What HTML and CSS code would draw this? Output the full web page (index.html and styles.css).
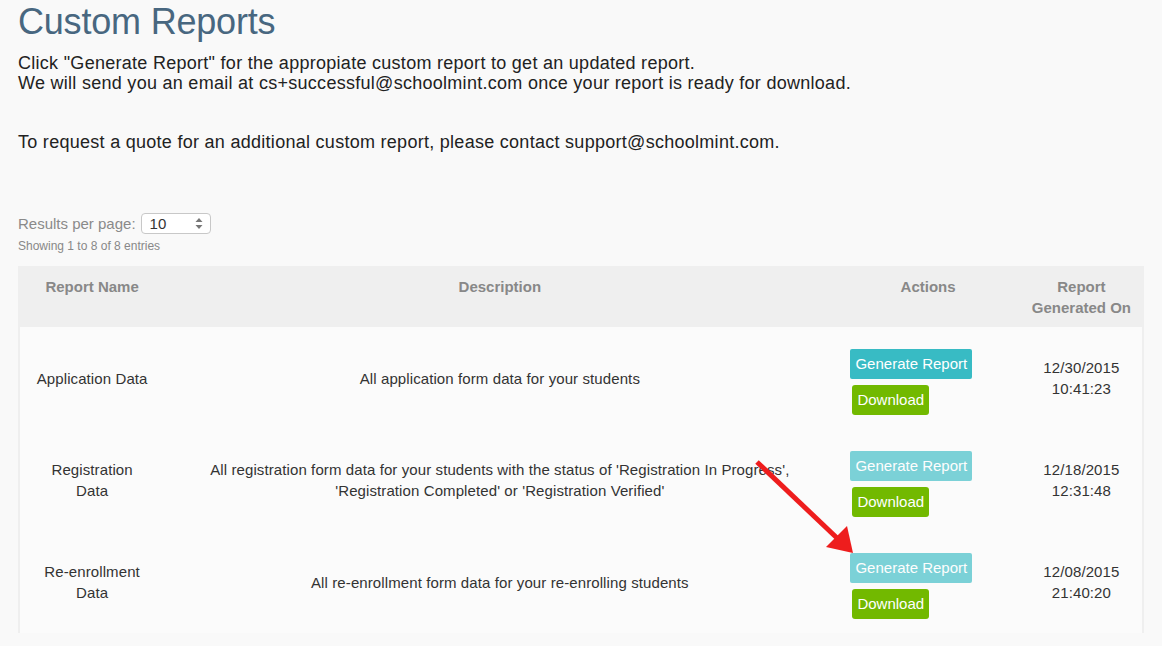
FILE: index.html
```html
<!DOCTYPE html>
<html lang="en">
<head>
    <meta charset="UTF-8">
    <meta name="viewport" content="width=device-width, initial-scale=1.0">
    <title>Custom Reports</title>
    <link rel="stylesheet" href="styles.css">
</head>
<body>
<div class="page">
    <h1>Custom Reports</h1>
    <p class="intro">Click "Generate Report" for the appropiate custom report to get an updated report.<br>
    We will send you an email at cs+successful@schoolmint.com once your report is ready for download.</p>
    <p class="intro quote">To request a quote for an additional custom report, please contact support@schoolmint.com.</p>

    <div class="per-page">
        <label>Results per page:</label>
        <div class="select-box">
            <span>10</span>
            <svg width="8" height="11" viewBox="0 0 8 11"><path d="M4 0 L7.5 4 L0.5 4 Z M4 11 L7.5 7 L0.5 7 Z" fill="#777"/></svg>
        </div>
    </div>
    <div class="showing">Showing 1 to 8 of 8 entries</div>

    <table class="reports">
        <colgroup>
            <col class="col-name">
            <col class="col-desc">
            <col class="col-actions">
            <col class="col-date">
        </colgroup>
        <thead>
            <tr>
                <th>Report Name</th>
                <th>Description</th>
                <th>Actions</th>
                <th>Report Generated On</th>
            </tr>
        </thead>
        <tbody>
            <tr>
                <td>Application Data</td>
                <td>All application form data for your students</td>
                <td class="actions"><button class="btn gen">Generate Report</button><button class="btn dl">Download</button></td>
                <td class="date">12/30/2015<br>10:41:23</td>
            </tr>
            <tr>
                <td>Registration Data</td>
                <td>All registration form data for your students with the status of 'Registration In Progress', 'Registration Completed' or 'Registration Verified'</td>
                <td class="actions"><button class="btn gen disabled">Generate Report</button><button class="btn dl">Download</button></td>
                <td class="date">12/18/2015<br>12:31:48</td>
            </tr>
            <tr>
                <td>Re-enrollment Data</td>
                <td>All re-enrollment form data for your re-enrolling students</td>
                <td class="actions"><button class="btn gen disabled">Generate Report</button><button class="btn dl">Download</button></td>
                <td class="date">12/08/2015<br>21:40:20</td>
            </tr>
        </tbody>
    </table>

    <svg class="arrow" width="1162" height="646" viewBox="0 0 1162 646">
        <line x1="757" y1="462" x2="837" y2="538" stroke="#ee1d1d" stroke-width="5"/>
        <polygon points="853,553 826,547 847,526" fill="#ee1d1d"/>
    </svg>
</div>
</body>
</html>
```

FILE: styles.css
```css
body { margin: 0; background-color: #f9f9f9; font-family: "Liberation Sans", Arial, sans-serif; color: #222; }
.page { position: relative; padding: 0 18px 40px; }
h1 { margin: 0; font-size: 36px; font-weight: normal; line-height: 44px; color: #486780; letter-spacing: -0.2px; }
.intro { margin: 9px 0 0; font-size: 18px; line-height: 20px; letter-spacing: 0.28px; }
.intro.quote { margin-top: 39px; }
.per-page { display: flex; align-items: center; margin-top: 60px; font-size: 15px; color: #8a8a8a; height: 22px; }
.per-page label { margin-right: 5px; }
.select-box { display: flex; align-items: center; justify-content: space-between; width: 53px; height: 19px; padding: 0 7px 0 8px; border: 1px solid #c8c8c8; border-radius: 4px; background: #fff; color: #333; font-size: 15px; }
.showing { margin-top: 5px; font-size: 12px; line-height: 14px; color: #888; }
.reports { margin-top: 13px; width: 100%; table-layout: fixed; border-collapse: collapse; border: 2px solid #efefef; border-top: none; border-bottom: none; font-size: 15px; color: #333; }
.col-name { width: 145px; }
.col-desc { width: 670px; }
.col-actions { width: 185px; }
.col-date { width: 122px; }
.reports th { background-color: #efefef; color: #888; font-weight: bold; line-height: 21px; padding: 10px 6px 9px; vertical-align: top; }
.reports td { background-color: #fbfbfb; text-align: center; vertical-align: middle; line-height: 21px; padding: 18px 15px; letter-spacing: 0.1px; }
.reports td.date { padding: 18px 6px; }
.reports td.actions { text-align: left; padding: 22px 15px 14px; letter-spacing: 0; }
.btn { display: block; border: none; color: #fff; font-family: "Liberation Sans", Arial, sans-serif; font-size: 15px; height: 30px; line-height: 30px; padding: 0 5px; cursor: pointer; }
.btn.gen { background-color: #38bbc4; border-radius: 2px; }
.btn.gen.disabled { opacity: 0.65; }
.btn.dl { background-color: #72b900; border-radius: 3px; margin: 6px 0 0 2px; }
.arrow { position: absolute; left: 0; top: 0; pointer-events: none; }
```
